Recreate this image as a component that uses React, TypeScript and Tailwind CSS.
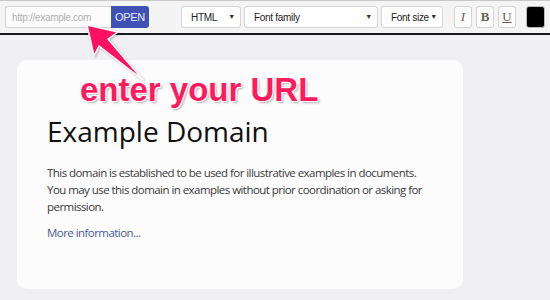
import { useState } from 'react'

const SELECTS = [
  { label: 'HTML', w: 'w-[60px]' },
  { label: 'Font family', w: 'w-[134px]' },
  { label: 'Font size', w: 'w-[62px]' },
]

function Select({ label, w }: { label: string; w: string }) {
  return (
    <div
      className={`${w} shrink-0 h-[22px] flex items-center justify-between pl-[9px] pr-[5px] bg-white border border-[#d4d4d4] rounded-[3px] text-[10px] tracking-[-0.3px] text-[#222] whitespace-nowrap`}
    >
      <span>{label}</span>
      <span className="text-[7px] text-[#333]">▼</span>
    </div>
  )
}

function StyleButton({ children, cls }: { children: string; cls: string }) {
  return (
    <button
      className={`w-[18px] h-[22px] shrink-0 flex items-center justify-center bg-[#fbfbfb] border border-[#d4d4d4] rounded-[3px] text-[13px] text-[#6b5f57] ${cls}`}
      style={{ fontFamily: '"Liberation Serif", serif' }}
    >
      {children}
    </button>
  )
}

export default function App() {
  const [url, setUrl] = useState('')

  return (
    <div
      className="w-[550px] h-[300px] relative overflow-hidden bg-[#f0f0f2]"
      style={{ fontFamily: '"Liberation Sans", Arial, sans-serif' }}
    >
      {/* Toolbar */}
      <header className="h-[35px] flex items-center bg-[#f4f4f5] border-t border-[#c8c8c8] border-b-2 border-b-[#1a1a1a] pl-[5px] pr-[3px]">
        <div className="flex h-[22px] shrink-0">
          <input
            value={url}
            onChange={(e) => setUrl(e.target.value)}
            placeholder="http://example.com"
            className="w-[106px] h-[22px] px-[6px] bg-[#fcfcfc] border border-[#d4d4d4] border-r-0 rounded-l-[3px] text-[10px] tracking-[-0.3px] text-[#333] placeholder:text-[#b0b0b0] outline-none"
          />
          <button className="w-[38px] h-[22px] bg-[#3f51b5] text-[#e8eaf6] text-[11px] tracking-[-0.3px] rounded-r-[3px] flex items-center justify-center">
            OPEN
          </button>
        </div>

        <div className="flex gap-[3px] ml-[32px] shrink-0">
          {SELECTS.map((s) => (
            <Select key={s.label} {...s} />
          ))}
        </div>

        <div className="flex gap-[4px] ml-[11px] shrink-0">
          <StyleButton cls="italic">I</StyleButton>
          <StyleButton cls="font-bold">B</StyleButton>
          <StyleButton cls="underline">U</StyleButton>
        </div>

        <div className="w-[19px] h-[22px] ml-[10px] shrink-0 bg-black rounded-[3px] border border-[#bbb]" />
      </header>

      {/* Page preview */}
      <main className="pt-[25px] pl-[17px]">
        <div
          className="w-[446px] h-[229px] bg-[#fcfcfd] rounded-[10px] pl-[30px] pt-[53px] text-[#333]"
          style={{ fontFamily: '"Open Sans", sans-serif' }}
        >
          <h1 className="text-[28px] leading-[36px] text-[#111] mb-[15px]">Example Domain</h1>
          <p className="text-[11.5px] leading-[17px] tracking-[-0.55px] w-[380px] text-[#3a3a3a]">
            This domain is established to be used for illustrative examples in documents. You may use this
            domain in examples without prior coordination or asking for permission.
          </p>
          <p className="text-[11.5px] leading-[17px] tracking-[-0.55px] mt-[9px]">
            <a href="#" className="text-[#4a5a9a]">More information...</a>
          </p>
        </div>
      </main>

      {/* Annotation */}
      <svg
        className="absolute left-0 top-0 drop-shadow-[1px_1px_1px_rgba(0,0,0,0.25)]"
        width="160"
        height="90"
        viewBox="0 0 160 90"
      >
        <polygon
          points="87,25 118,32 108,39 143,80 99,46 94,56"
          fill="#ff1060"
          stroke="#ffffff"
          strokeWidth="1.5"
          strokeLinejoin="round"
        />
      </svg>
      <div
        className="absolute left-[80px] top-[72px] text-[33px] leading-[36px] font-bold text-[#ff1a5e] [text-shadow:1px_1px_0_#fff,-1px_-1px_0_#fff,1px_-1px_0_#fff,-1px_1px_0_#fff,2px_2px_2px_rgba(0,0,0,0.3)]"
        style={{ fontFamily: '"Liberation Sans", Arial, sans-serif' }}
      >
        enter your URL
      </div>
    </div>
  )
}
